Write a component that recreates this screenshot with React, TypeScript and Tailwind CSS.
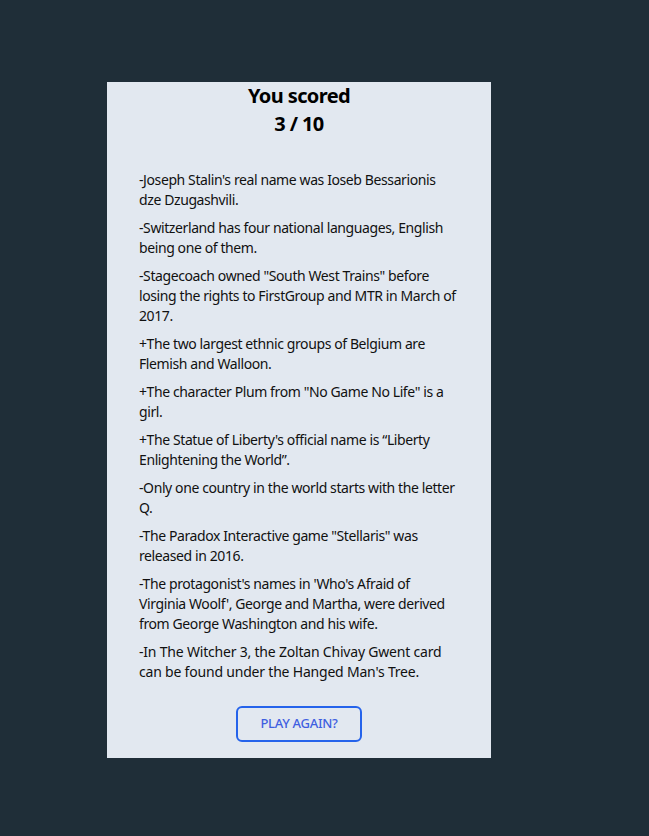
const facts = [
  { text: "-Joseph Stalin's real name was Ioseb Bessarionis dze Dzugashvili." },
  { text: "-Switzerland has four national languages, English being one of them." },
  { text: '-Stagecoach owned "South West Trains" before losing the rights to FirstGroup and MTR in March of 2017.' },
  { text: "+The two largest ethnic groups of Belgium are Flemish and Walloon." },
  { text: '+The character Plum from "No Game No Life" is a girl.' },
  { text: "+The Statue of Liberty's official name is \u201cLiberty Enlightening the World\u201d." },
  { text: "-Only one country in the world starts with the letter Q." },
  { text: '-The Paradox Interactive game "Stellaris" was released in 2016.' },
  { text: "-The protagonist's names in 'Who's Afraid of Virginia Woolf', George and Martha, were derived from George Washington and his wife." },
  // wraps a word earlier in the original font
  { text: "-In The Witcher 3, the Zoltan Chivay Gwent card can be found under the Hanged Man's Tree.", spacing: "tracking-[-0.2px]" },
];

const App = () => {
  return (
    <main className="min-h-screen bg-[#1f2e38] pt-[82px] font-['Noto_Sans',sans-serif]">
      <div className="ml-[107px] flex w-96 flex-col items-center bg-[#e2e8f0] px-8 pb-4 text-[#111]">
        <h1 className="text-xl font-bold tracking-[-0.6px] text-black">You scored</h1>
        <h2 className="mb-8 text-xl font-bold tracking-[-0.6px] text-black">3 / 10</h2>

        <ul className="w-full space-y-2 text-sm tracking-[-0.4px]">
          {facts.map((fact) => (
            <li key={fact.text} className={fact.spacing ?? ""}>
              {fact.text}
            </li>
          ))}
        </ul>

        <button className="mt-6 rounded-md border-2 border-[#2563eb] px-[22px] py-1.5 text-[13px] font-medium tracking-[-0.3px] text-[#3f5fe0]">
          PLAY AGAIN?
        </button>
      </div>
    </main>
  );
};

export default App;
